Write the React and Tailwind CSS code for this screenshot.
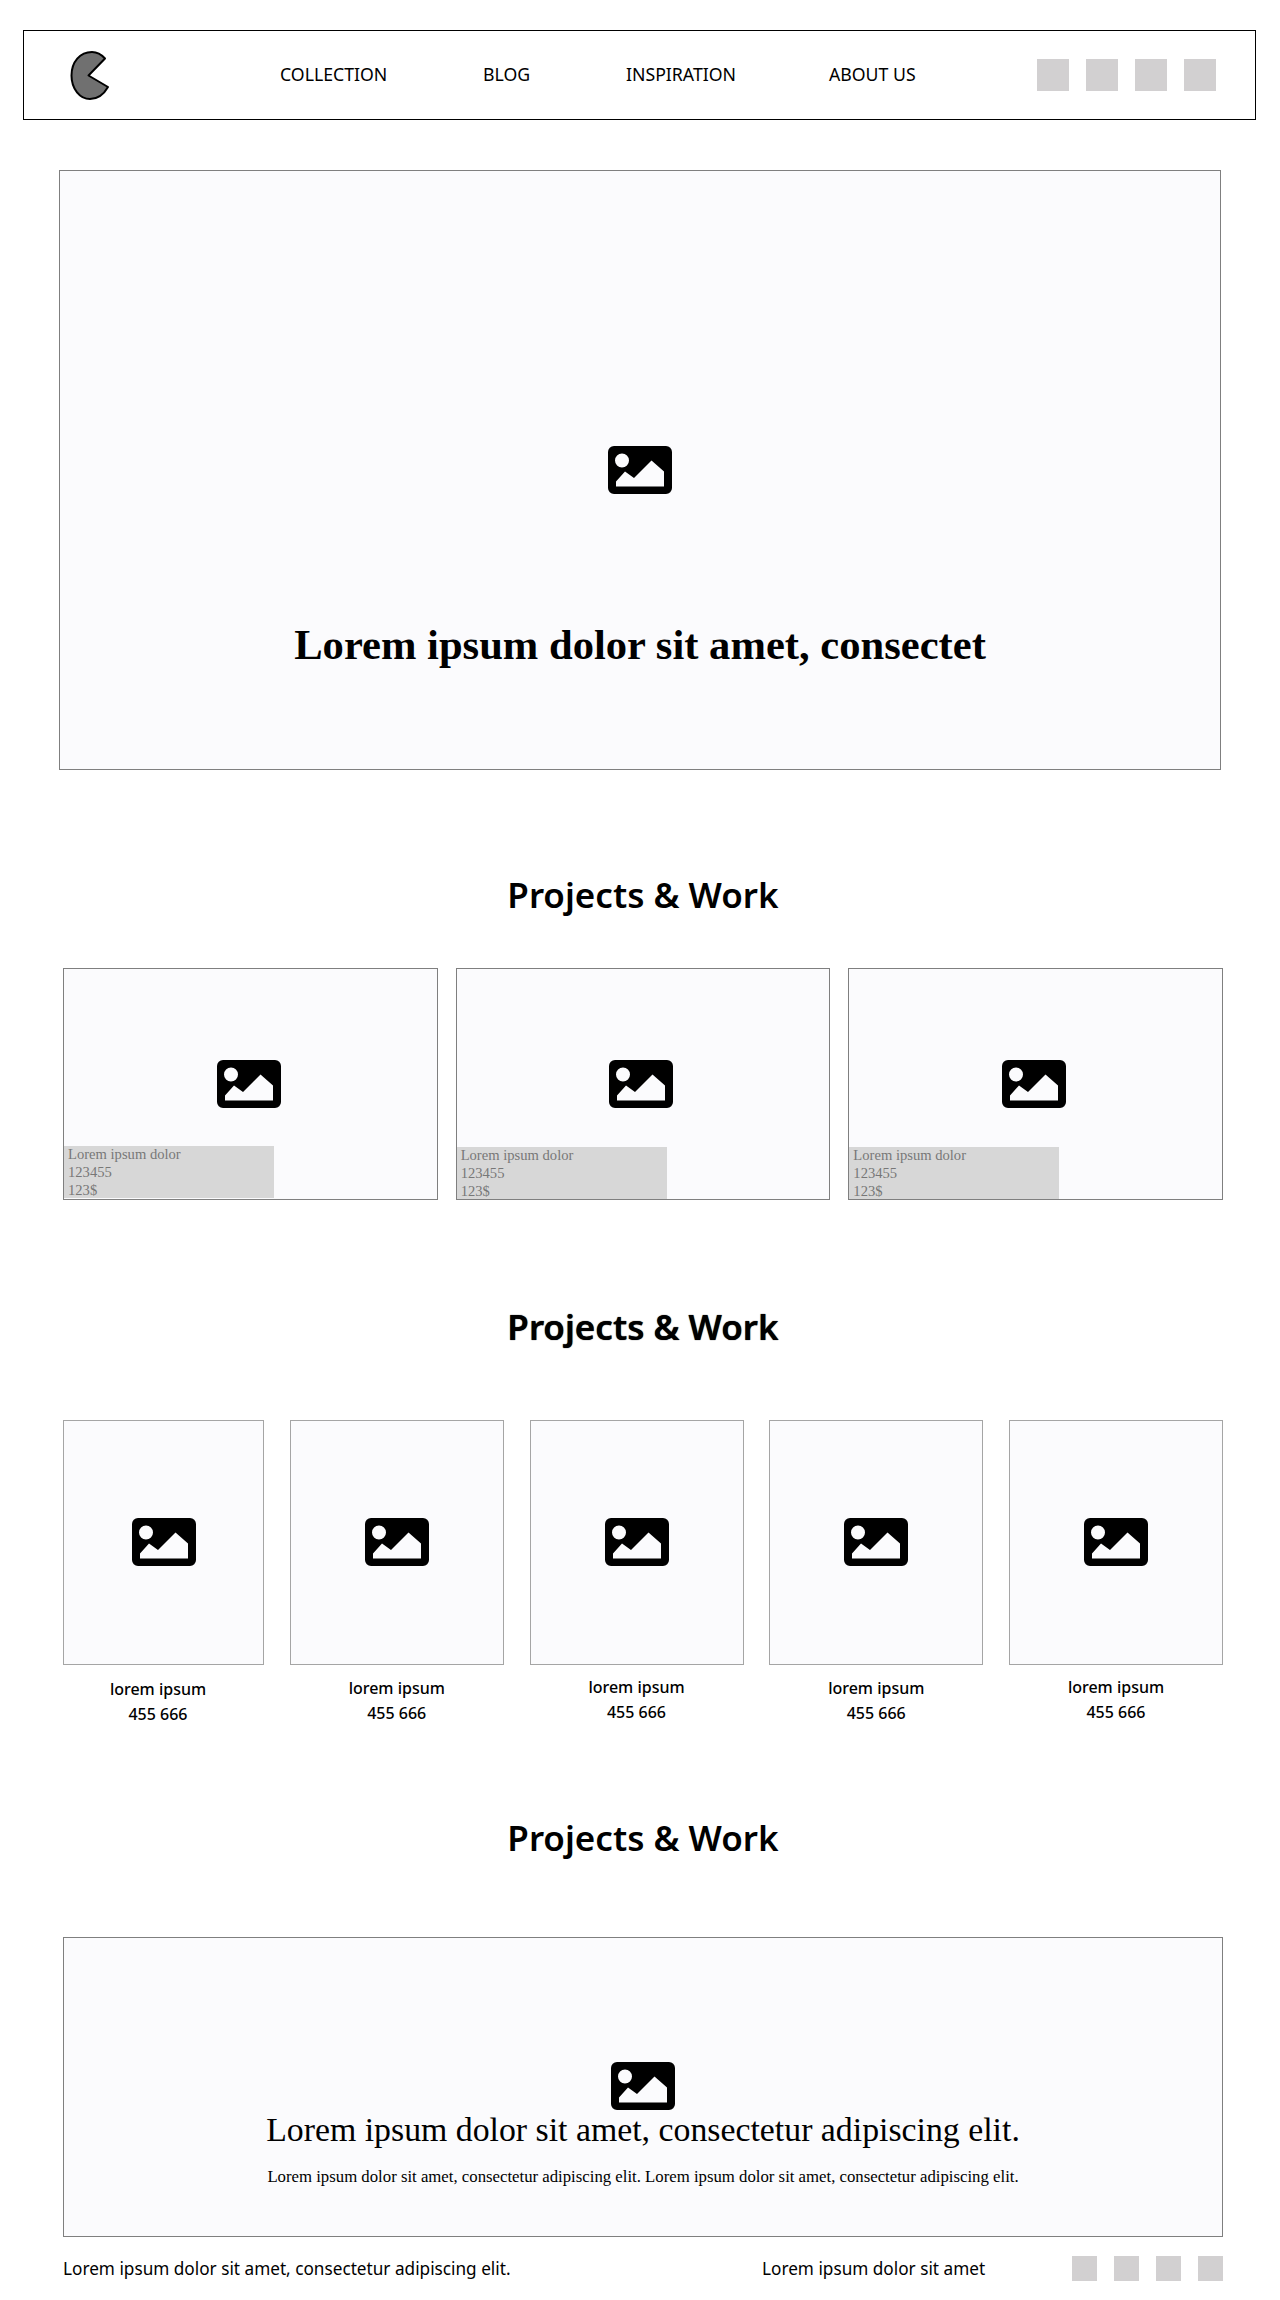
const sans = "font-['Noto_Sans',sans-serif]"
const serif = "font-['Liberation_Serif',serif]"

const navLinks = [
  { label: "COLLECTION", width: "w-[203px]" },
  { label: "BLOG", width: "w-[143px]" },
  { label: "INSPIRATION", width: "w-[203px]" },
  { label: "ABOUT US", width: "w-auto" },
]

const projects = [
  { overlay: "bottom-[1px]" },
  { overlay: "bottom-0" },
  { overlay: "bottom-0" },
]

const items = [
  { box: "w-[201px]", caption: "mt-[12px] pr-[11px]" },
  { box: "w-[214px]", caption: "mt-[11px]" },
  { box: "w-[214px]", caption: "mt-[10px]" },
  { box: "w-[214px]", caption: "mt-[11px]" },
  { box: "w-[214px]", caption: "mt-[10px]" },
]

function ImageIcon({ className }) {
  return (
    <svg viewBox="0 0 64 48" className={className} aria-hidden>
      <path
        fill="#000"
        fillRule="evenodd"
        d="M6 0H58A6 6 0 0 1 64 6V42A6 6 0 0 1 58 48H6A6 6 0 0 1 0 42V6A6 6 0 0 1 6 0ZM14 7.5A7 7 0 1 0 14 21.5A7 7 0 1 0 14 7.5ZM8 40.5H56V25.5L43.5 14.5L26 32L17 25.5L8 35.5Z"
      />
    </svg>
  )
}

function Logo() {
  return (
    <svg viewBox="0 0 40 49" className="h-[49px] w-[40px]" aria-hidden>
      <path
        d="M35 7.5C31 3 27 1 22 1C10 1 1.500 11 1.500 24.500C1.500 38 10 48 20 48C28 48 34 43 38 36L18.500 24.500Z"
        fill="#707070"
        stroke="#000"
        strokeWidth="2"
        strokeLinejoin="round"
      />
    </svg>
  )
}

function Heading({ className }) {
  return (
    <h2 className={`${sans} text-center text-[35px] leading-[48px] font-semibold text-black ${className}`}>
      Projects &amp; Work
    </h2>
  )
}

export default function App() {
  return (
    <div className="relative h-[2300px] w-[1280px] overflow-hidden bg-white text-black">
      <header className={`${sans} ml-[23px] mt-[30px] flex h-[90px] w-[1233px] items-center border border-black pl-[46px] pr-[39px]`}>
        <Logo />
        <nav className="mb-[3px] ml-[170px] flex text-[17.700px] leading-[24px]">
          {navLinks.map((link) => (
            <span key={link.label} className={link.width}>
              {link.label}
            </span>
          ))}
        </nav>
        <div className="ml-auto flex gap-[17px]">
          {[1, 2, 3, 4].map((i) => (
            <div key={i} className="h-[32px] w-[32px] bg-[#d2d0d1]" />
          ))}
        </div>
      </header>

      <section className="ml-[59px] mt-[50px] flex h-[600px] w-[1162px] flex-col items-center border border-[#7f7f7f] bg-[#fbfbfd] pt-[275px]">
        <ImageIcon className="h-[48px] w-[64px]" />
        <h1 className={`${serif} mt-[123px] text-[42.600px] leading-[56px] font-bold`}>
          Lorem ipsum dolor sit amet, consectet
        </h1>
      </section>

      <Heading className="mt-[101px] pl-[6px]" />

      <div className="ml-[63px] mt-[49px] grid w-[1160px] grid-cols-3 gap-[18px]">
        {projects.map((project, i) => (
          <div key={i} className="relative flex h-[232px] items-center justify-center border border-[#7f7f7f] bg-[#fbfbfd] pr-[3px]">
            <ImageIcon className="h-[48px] w-[64px]" />
            <div className={`${serif} absolute left-0 ${project.overlay} h-[52px] w-[210px] bg-[#d7d7d7] pl-[4px] text-[14.600px] leading-[18px] text-[#777]`}>
              <p className="-mt-px">Lorem ipsum dolor</p>
              <p>123455</p>
              <p>123$</p>
            </div>
          </div>
        ))}
      </div>

      <Heading className="mt-[103px] pl-[6px] [text-shadow:0_0_1px_#000]" />

      <div className="ml-[63px] mt-[69px] flex w-[1160px] justify-between">
        {items.map((item, i) => (
          <div key={i} className={item.box}>
            <div className="flex h-[245px] items-center justify-center border border-[#a5a5a5] bg-[#fbfbfd] pb-[2px]">
              <ImageIcon className="h-[48px] w-[64px]" />
            </div>
            <div className={`${sans} ${item.caption} text-center text-[16px] leading-[24.500px] font-medium`}>
              <p>lorem ipsum</p>
              <p>455 666</p>
            </div>
          </div>
        ))}
      </div>

      <Heading className="mt-[88px] pl-[6px]" />

      <section className="ml-[63px] mt-[75px] flex h-[300px] w-[1160px] flex-col items-center border border-[#7f7f7f] bg-[#fbfbfd] pt-[124px]">
        <ImageIcon className="h-[48px] w-[64px]" />
        <h3 className={`${serif} text-[33.800px] leading-[40px]`}>
          Lorem ipsum dolor sit amet, consectetur adipiscing elit.
        </h3>
        <p className={`${serif} mt-[15px] text-[16.750px] leading-[24px]`}>
          Lorem ipsum dolor sit amet, consectetur adipiscing elit. Lorem ipsum dolor sit amet, consectetur adipiscing elit.
        </p>
      </section>

      <footer className={`${sans} ml-[63px] mt-[19px] flex w-[1160px] items-center text-[17.200px] leading-[25px]`}>
        <span className="w-[699px]">Lorem ipsum dolor sit amet, consectetur adipiscing elit.</span>
        <span>Lorem ipsum dolor sit amet</span>
        <div className="ml-auto flex gap-[17px]">
          {[1, 2, 3, 4].map((i) => (
            <div key={i} className="h-[25px] w-[25px] bg-[#d2d0d1]" />
          ))}
        </div>
      </footer>
    </div>
  )
}
